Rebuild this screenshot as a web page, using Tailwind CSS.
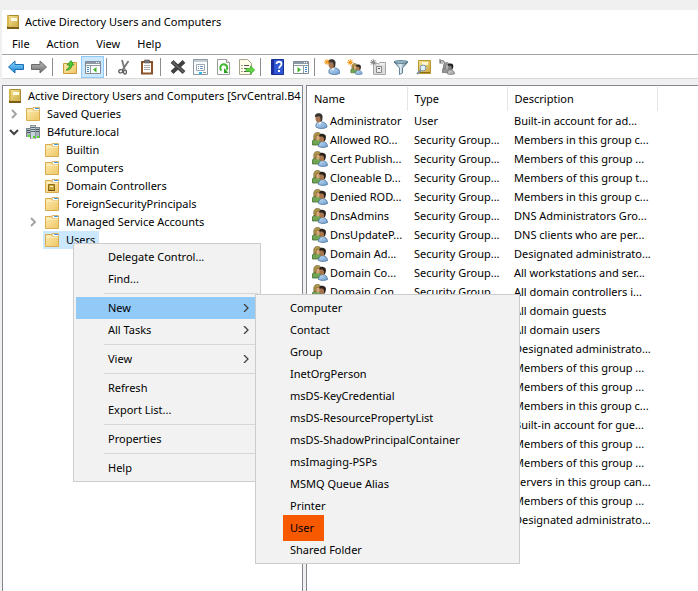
<!DOCTYPE html>
<html lang="en">
<head>
    <meta charset="UTF-8">
    <meta name="viewport" content="width=device-width, initial-scale=1.0">
    <title>Active Directory Users and Computers</title>
    <script src="https://cdn.jsdelivr.net/npm/@tailwindcss/browser@4"></script>
</head>
<body class="bg-[#f0f0f0] font-['Noto_Sans',sans-serif] text-[11px] leading-4 text-black">

  <!-- icons -->
  <svg class="absolute w-0 h-0">
    <defs>
      <linearGradient id="gold" x1="0" y1="0" x2="1" y2="1"><stop offset="0" stop-color="#f6e49a"/><stop offset="1" stop-color="#c9a63c"/></linearGradient>
      <linearGradient id="tan" x1="0" y1="0" x2="1" y2="1"><stop offset="0" stop-color="#fdeaae"/><stop offset="1" stop-color="#eec766"/></linearGradient>
      <linearGradient id="blue" x1="0" y1="0" x2="0" y2="1"><stop offset="0" stop-color="#8fd8fb"/><stop offset="1" stop-color="#1583d6"/></linearGradient>
      <linearGradient id="gray" x1="0" y1="0" x2="0" y2="1"><stop offset="0" stop-color="#bdbdbd"/><stop offset="1" stop-color="#6e6e6e"/></linearGradient>
      <linearGradient id="steel" x1="0" y1="0" x2="1" y2="0"><stop offset="0" stop-color="#5c8299"/><stop offset=".45" stop-color="#e3f1f7"/><stop offset="1" stop-color="#3f6178"/></linearGradient>
      <linearGradient id="shirt" x1="0" y1="0" x2="1" y2="1"><stop offset="0" stop-color="#c3dcf4"/><stop offset="1" stop-color="#6f9fd0"/></linearGradient>
    </defs>

    <symbol id="book" viewBox="0 0 16 16">
      <path d="M2.500 1.500h11v13h-11z" fill="url(#gold)" stroke="#a88a30"/>
      <path d="M2 1h2v11H2z" fill="#d8b64c"/>
      <path d="M6 4h6v3H6z" fill="#fffbe2"/>
      <path d="M2 13h12v2H2z" fill="#7d5d14"/><path d="M3 12h10v1H3z" fill="#d6b85a"/>
    </symbol>
    <symbol id="folder" viewBox="0 0 16 16">
      <path d="M8 1.500h6.500v4H8z" fill="#fff" stroke="#d9b469" stroke-width="1"/>
      <path d="M10 2h4v1h-4z" fill="#3f9be6"/>
      <path d="M1.500 2.500h6l1 2h6v10h-13z" fill="url(#tan)" stroke="#d9ac4e"/>
      <path d="M2 5h12" stroke="#fff3cb"/>
    </symbol>
    <symbol id="oufolder" viewBox="0 0 16 16">
      <use href="#folder"/>
      <path d="M4.500 6.500h6v6h-6z" fill="#c9a437" stroke="#8d6b14"/><path d="M6 8h3v1H6z" fill="#fffbe2"/><path d="M4 12h7v1H4z" fill="#6d5010"/>
    </symbol>
    <symbol id="domain" viewBox="0 0 16 16">
      <path d="M1 4h5v9H1z" fill="#a9b4bb"/><path d="M10 3h5v11h-5z" fill="#a9b4bb"/>
      <path d="M1 4h5v1H1zM10 3h5v1h-5zM1 4h1v9H1zM14 4h1v10h-1z" fill="#76838b"/>
      <path d="M2 6.500h3M2 8.500h3M11 5.500h3M11 7.500h3" stroke="#4d5b64"/>
      <path d="M5 1h6v14H5z" fill="#c9d2d7"/><path d="M5 1h6v1H5zM5 1h1v14H5zM10 1h1v14h-1z" fill="#86929a"/>
      <path d="M6 3.500h4M6 5.500h4M6 7.500h4" stroke="#56646d"/>
      <path d="M3 11h2v2H3zM8 12h2v2H8zM12 12h2v2h-2z" fill="#4ee01d"/>
    </symbol>
    <symbol id="user" viewBox="0 0 16 16">
      <path d="M4 14c-.500-3 .500-5 3.500-5.500l3 .500c3 .500 4.500 2.500 4.500 5-3 2-8 2-11 0z" fill="url(#shirt)" stroke="#48709c" stroke-width=".8"/>
      <path d="M6 8l2 3.500L10 8z" fill="#fff"/>
      <path d="M3.500 3.500h6v3c0 2-1.500 3-3 3-2 0-3-2-3-4z" fill="#a87650"/>
      <path d="M3 4C2.500 1.500 4.500.200 6.500.200 9.500.200 11 2 10.500 5L10 8l-1.500 1V5L7.500 3.500z" fill="#39332f"/>
    </symbol>
    <symbol id="group" viewBox="0 0 16 16">
      <path d="M.500 13v-4c1-2 3-2.500 4.500-2.500s3 .500 3.500 2.500v4z" fill="#70a653" stroke="#426b2d" stroke-width=".8"/>
      <path d="M3 3h5v3c0 2-1 2.500-2.500 2.500S3 7 3 5z" fill="#d9a878"/>
      <path d="M2 7.500C1 2 3 .500 5.500 .500S9 2 9 3.500L5 3 4 4v4z" fill="#b59a4a" stroke="#5f5026" stroke-width=".6"/>
      <path d="M6.500 14.500c0-3 1.500-5 4-5s5 2 5 5c-3 1.200-6 1.200-9 0z" fill="url(#shirt)" stroke="#48709c" stroke-width=".8"/>
      <path d="M7.500 4h5v3.500c0 2-1 2.500-2.500 2.500S7.500 8.500 7.500 7z" fill="#a8754d"/>
      <path d="M7.200 4.500c0-2.500 2-2.800 4-2.600 2.800.300 3.500 3 2 6.600L12 9.500V6l-1.500-1.500z" fill="#28221f"/>
    </symbol>
    <symbol id="star" viewBox="0 0 16 16">
      <path d="M4 0v8M0 4h8M1.200 1.200l5.600 5.600M6.800 1.200L1.200 6.800" stroke="currentColor" stroke-width="1.200"/><circle cx="4" cy="4" r="2" fill="currentColor"/>
    </symbol>
    <symbol id="chevron" viewBox="0 0 8 8"><path d="M2 0l4 4-4 4" fill="none" stroke="currentColor" stroke-width="1.300"/></symbol>
    <symbol id="tree-chevron" viewBox="0 0 10 10"><path d="M3 1l4 4-4 4" fill="none" stroke="currentColor" stroke-width="1.800"/></symbol>
    <symbol id="chevron-down" viewBox="0 0 10 8"><path d="M1 2l4 4 4-4" fill="none" stroke="currentColor" stroke-width="2"/></symbol>
  </svg>

  <div class="flex flex-col min-h-screen pt-[10px] pl-[2px]">
    <header class="bg-white">
      <div class="flex items-center h-6 pl-[3px] gap-1">
        <svg class="w-4 h-4"><use href="#book"/></svg>
        <h1>Active Directory Users and Computers</h1>
      </div>
      <nav class="flex items-center h-5 pl-[10px] gap-[17px]">
        <button>File</button>
        <button>Action</button>
        <button>View</button>
        <button>Help</button>
      </nav>

      <!-- toolbar -->
      <div class="flex items-center h-[25px] pl-[2px] border-t border-b border-t-[#a3a3a8] border-b-[#d9d9d9]">
        <button aria-label="Back" class="flex w-[23px] h-[22px] items-center justify-center">
          <svg class="w-4 h-4" viewBox="0 0 16 16"><path d="M.500 8L7 2v3.500h8.500v5H7V14z" fill="url(#blue)" stroke="#1c6db3"/></svg>
        </button>
        <button aria-label="Forward" class="flex w-[23px] h-[22px] items-center justify-center">
          <svg class="w-4 h-4" viewBox="0 0 16 16"><path d="M15.500 8L9 2v3.500H.500v5H9V14z" fill="url(#gray)" stroke="#6b6b6b"/></svg>
        </button>
        <span class="w-px h-[18px] mr-[5px] ml-[2px] bg-[#8d8d8d]"></span>
        <button aria-label="Up one level" class="flex w-[23px] h-[22px] items-center justify-center">
          <svg class="w-4 h-4" viewBox="0 0 16 16"><path d="M1.500 4.500h6l1-1h6v11h-13z" fill="url(#tan)" stroke="#c99b3c"/><path d="M4 11c2-1 3.500-3 3.500-5H5l4-4.500L12 6h-2c0 3-2.500 5.500-6 5z" fill="#4fc93a" stroke="#268a1b" stroke-width=".7"/></svg>
        </button>
        <button aria-label="Console tree" class="flex w-[23px] h-[22px] items-center justify-center border border-[#90c8f6] bg-[#cce8ff]">
          <svg class="w-4 h-4" viewBox="0 0 16 16"><path d="M.500 2.500h15v12H.500z" fill="#fff" stroke="#7e8b97"/><path d="M1 3h14v2H1z" fill="#8d99a4"/><path d="M1 6.500h14M5.500 7v7" stroke="#8d99a4"/><path d="M11 3.500h1M13 3.500h1" stroke="#fff"/><path d="M2 8.500h2M2 10.500h2M2 12.500h2" stroke="#3c86c8"/><path d="M11.500 8v5.500l-3.500-2.700z" fill="#3fb52a"/></svg>
        </button>
        <span class="w-px h-[18px] mr-[5px] ml-[2px] bg-[#8d8d8d]"></span>
        <button aria-label="Cut" class="flex w-[23px] h-[22px] items-center justify-center">
          <svg class="w-4 h-4" viewBox="0 0 16 16" fill="none"><path d="M6 1l2.500 9M12.500 2L6.500 11" stroke="#777" stroke-width="1.800"/><ellipse cx="4.800" cy="12.300" rx="2" ry="1.700" stroke="#555" stroke-width="1.200"/><ellipse cx="9" cy="13" rx="1.400" ry="2.200" stroke="#555" stroke-width="1.200"/></svg>
        </button>
        <button aria-label="Paste" class="flex w-[23px] h-[22px] items-center justify-center">
          <svg class="w-4 h-4" viewBox="0 0 16 16"><path d="M3 3h10v11.500H3z" fill="#fff" stroke="#8a5229" stroke-width="2"/><path d="M5.500 1h5v3h-5z" fill="#777" stroke="#555" stroke-width=".6"/><path d="M5 6.500h6M5 8.500h6M5 10.500h6" stroke="#aaa"/></svg>
        </button>
        <span class="w-px h-[18px] mr-[5px] ml-[2px] bg-[#8d8d8d]"></span>
        <button aria-label="Delete" class="flex w-[23px] h-[22px] items-center justify-center">
          <svg class="w-4 h-4" viewBox="0 0 16 16"><path d="M2 2.500l12 11M14 2.500l-12 11" stroke="#404040" stroke-width="4"/><path d="M2 2.500l12 11" stroke="#666" stroke-width="1.500"/></svg>
        </button>
        <button aria-label="Properties" class="flex w-[23px] h-[22px] items-center justify-center">
          <svg class="w-4 h-4" viewBox="0 0 16 16"><path d="M.500.500h14v15H.500z" fill="#fbfcfd" stroke="#8f98a1"/><path d="M1 1h13v2H1z" fill="#c5cdd5"/><path d="M3.500 5.500h8v6h-8z" fill="#fff" stroke="#9fa9b5"/><path d="M5 7.500h1M7 7.500h3M5 9.500h1M7 9.500h3" stroke="#6f93ba"/><path d="M6 13h3v2H6z" fill="#25baf0"/><path d="M10 13.500h3" stroke="#8f98a1"/></svg>
        </button>
        <button aria-label="Refresh" class="flex w-[23px] h-[22px] items-center justify-center">
          <svg class="w-4 h-4" viewBox="0 0 16 16"><path d="M1.500.500h9l3 3v12h-12z" fill="#fff" stroke="#9a9a9a"/><path d="M10.500.500v3h3" fill="#eee" stroke="#9a9a9a"/><path d="M5.500 11.500A3.500 3.500 0 1 1 10.500 11" fill="none" stroke="#43b834" stroke-width="2"/><path d="M8 9v5h4.500z" fill="#2f9e23"/></svg>
        </button>
        <button aria-label="Export list" class="flex w-[23px] h-[22px] items-center justify-center">
          <svg class="w-4 h-4" viewBox="0 0 16 16"><path d="M.500.500h8l4 4v11H.500z" fill="#fffdea" stroke="#a8a48d"/><path d="M2.500 6.500h1M2.500 9.500h1M2.500 12.500h1M5 6.500h5M5 9.500h3M5 12.500h5" stroke="#555"/><path d="M7 9.500h4.500V7l4.200 4-4.200 4v-2.500H7z" fill="#62d944" stroke="#2f9e23" stroke-width=".7"/></svg>
        </button>
        <span class="w-px h-[18px] mr-[5px] ml-[2px] bg-[#8d8d8d]"></span>
        <button aria-label="Help" class="flex w-[23px] h-[22px] items-center justify-center">
          <svg class="w-4 h-4" viewBox="0 0 16 16"><path d="M1.500 .500h12v15h-12z" fill="#3057d6" stroke="#1b2e8f"/><path d="M2 1h2v14H2z" fill="#1b2e9f"/><path d="M6.500 5c0-3 5-3 5 0 0 2-2.500 2.200-2.500 4.500" fill="none" stroke="#fff" stroke-width="1.800"/><path d="M8 11h2v2H8z" fill="#fff"/></svg>
        </button>
        <button aria-label="Action pane" class="flex w-[23px] h-[22px] items-center justify-center">
          <svg class="w-4 h-4" viewBox="0 0 16 16"><path d="M.500 2.500h15v12H.500z" fill="#fff" stroke="#7e8b97"/><path d="M1 3h14v2H1z" fill="#8d99a4"/><path d="M1 6.500h14M10.500 7v7" stroke="#8d99a4"/><path d="M11 3.500h1M13 3.500h1" stroke="#fff"/><path d="M12 8.500h2M12 10.500h2M12 12.500h2" stroke="#3c86c8"/><path d="M4.500 8v5.500L8 10.800z" fill="#3fb52a"/></svg>
        </button>
        <span class="w-px h-[18px] mr-[5px] ml-[2px] bg-[#8d8d8d]"></span>
        <button aria-label="New user" class="flex w-[23px] h-[22px] items-center justify-center">
          <svg class="w-4 h-4" viewBox="0 0 16 16"><use href="#user" x="1" y="0" width="16" height="16"/><use href="#star" width="12" height="12" class="text-[#f39a1c]"/></svg>
        </button>
        <button aria-label="New group" class="flex w-[23px] h-[22px] items-center justify-center">
          <svg class="w-4 h-4" viewBox="0 0 16 16"><use href="#group" x="3" y="4" width="13" height="12"/><use href="#star" width="13" height="13" class="text-[#f39a1c]"/></svg>
        </button>
        <button aria-label="New organizational unit" class="flex w-[23px] h-[22px] items-center justify-center">
          <svg class="w-4 h-4" viewBox="0 0 16 16"><path d="M3.500 4.500h5l1-1h6v12h-12z" fill="#dcdcdc" stroke="#a8a8a8"/><path d="M10 5h5" stroke="#fff"/><path d="M6.500 7.500h5v6h-5z" fill="#ececec" stroke="#888"/><path d="M8 9.500h2" stroke="#555"/><use href="#star" width="13" height="13" class="text-[#8b8b8b]"/></svg>
        </button>
        <button aria-label="Filter" class="flex w-[23px] h-[22px] items-center justify-center">
          <svg class="w-4 h-4" viewBox="0 0 16 16"><path d="M1 3l5.500 6v6.500l3-1.500V9L15 3z" fill="url(#steel)" stroke="#47687d" stroke-width=".8"/><ellipse cx="8" cy="3" rx="7" ry="1.400" fill="#9dbccb" stroke="#47687d" stroke-width=".8"/></svg>
        </button>
        <button aria-label="Find" class="flex w-[23px] h-[22px] items-center justify-center">
          <svg class="w-4 h-4" viewBox="0 0 16 16"><path d="M2.500 1.500h12v13h-12z" fill="url(#gold)" stroke="#b8982e"/><path d="M6 3h6v3H6z" fill="#fff8cf"/><path d="M3 13h11v1H3z" fill="#8c6c17"/><circle cx="7" cy="9" r="3" fill="#dff0fb" stroke="#7c93a6"/><path d="M4.800 11.200L1 15" stroke="#7c93a6" stroke-width="2"/></svg>
        </button>
        <button aria-label="Add to group" class="flex w-[23px] h-[22px] items-center justify-center">
          <svg class="w-4 h-4 grayscale" viewBox="0 0 16 16"><use href="#group" x="3" y="3" width="13" height="13"/><path d="M1 3.500C2 1 4.500 1 5.500 4M1 0v4h3" fill="none" stroke="#777" stroke-width="1.200"/></svg>
        </button>
      </div>
    </header>

    <main class="flex grow pt-[6px]">
      <!-- console tree -->
      <div class="relative w-[301px] shrink-0 bg-white border-t border-l border-r border-[#828790]">
        <ul class="pt-px whitespace-nowrap overflow-hidden">
          <li class="flex items-center h-[18px] pl-1 gap-[5px]"><svg class="w-4 h-4 shrink-0"><use href="#book"/></svg>Active Directory Users and Computers [SrvCentral.B4</li>
          <li class="flex items-center h-[18px] pl-[6px] gap-[6px]">
            <svg class="w-[10px] h-[10px] text-[#a0a0a0]"><use href="#tree-chevron"/></svg><svg class="w-4 h-4"><use href="#folder"/></svg>Saved Queries
          </li>
          <li class="flex items-center h-[18px] pl-[6px] gap-[6px]">
            <svg class="w-[10px] h-[10px] text-[#404040]"><use href="#chevron-down"/></svg><svg class="w-4 h-4"><use href="#domain"/></svg>B4future.local
          </li>
          <li class="flex items-center h-[18px] pl-[41px] gap-[6px]"><svg class="w-4 h-4"><use href="#folder"/></svg>Builtin</li>
          <li class="flex items-center h-[18px] pl-[41px] gap-[6px]"><svg class="w-4 h-4"><use href="#folder"/></svg>Computers</li>
          <li class="flex items-center h-[18px] pl-[41px] gap-[6px]"><svg class="w-4 h-4"><use href="#oufolder"/></svg>Domain Controllers</li>
          <li class="flex items-center h-[18px] pl-[41px] gap-[6px]"><svg class="w-4 h-4"><use href="#folder"/></svg>ForeignSecurityPrincipals</li>
          <li class="flex items-center h-[18px] pl-[25px] gap-[6px]">
            <svg class="w-[10px] h-[10px] text-[#a0a0a0]"><use href="#tree-chevron"/></svg><svg class="w-4 h-4"><use href="#folder"/></svg>Managed Service Accounts
          </li>
          <li class="flex h-[18px] pl-10"><span class="flex items-center pl-px pr-1 gap-[6px] bg-[#cce8ff]"><svg class="w-4 h-4"><use href="#folder"/></svg>Users</span></li>
        </ul>

        <!-- context menu -->
        <div class="absolute left-[70px] top-[157px] z-10 w-[188px] p-[2px] bg-[#f2f2f2] border border-[#ccc]">
          <button class="flex items-center w-full h-[22px] pl-8">Delegate Control...</button>
          <button class="flex items-center w-full h-[22px] pl-8">Find...</button>
          <hr class="my-[3px] ml-7 border-[#d7d7d7]">
          <button class="flex items-center justify-between w-full h-[22px] pl-8 pr-2 bg-[#91c9f7]">New<svg class="w-2 h-2 text-[#404040]"><use href="#chevron"/></svg></button>
          <button class="flex items-center justify-between w-full h-[22px] pl-8 pr-2">All Tasks<svg class="w-2 h-2 text-[#404040]"><use href="#chevron"/></svg></button>
          <hr class="my-[3px] ml-7 border-[#d7d7d7]">
          <button class="flex items-center justify-between w-full h-[22px] pl-8 pr-2">View<svg class="w-2 h-2 text-[#404040]"><use href="#chevron"/></svg></button>
          <hr class="my-[3px] ml-7 border-[#d7d7d7]">
          <button class="flex items-center w-full h-[22px] pl-8">Refresh</button>
          <button class="flex items-center w-full h-[22px] pl-8">Export List...</button>
          <hr class="my-[3px] ml-7 border-[#d7d7d7]">
          <button class="flex items-center w-full h-[22px] pl-8">Properties</button>
          <hr class="my-[3px] ml-7 border-[#d7d7d7]">
          <button class="flex items-center w-full h-[22px] pl-8">Help</button>

          <!-- New submenu -->
          <div class="absolute left-[181px] top-[50px] w-[265px] p-[2px] bg-[#f2f2f2] border border-[#ccc]">
            <button class="flex items-center w-full h-[22px] pl-8">Computer</button>
            <button class="flex items-center w-full h-[22px] pl-8">Contact</button>
            <button class="flex items-center w-full h-[22px] pl-8">Group</button>
            <button class="flex items-center w-full h-[22px] pl-8">InetOrgPerson</button>
            <button class="flex items-center w-full h-[22px] pl-8">msDS-KeyCredential</button>
            <button class="flex items-center w-full h-[22px] pl-8">msDS-ResourcePropertyList</button>
            <button class="flex items-center w-full h-[22px] pl-8">msDS-ShadowPrincipalContainer</button>
            <button class="flex items-center w-full h-[22px] pl-8">msImaging-PSPs</button>
            <button class="flex items-center w-full h-[22px] pl-8">MSMQ Queue Alias</button>
            <button class="flex items-center w-full h-[22px] pl-8">Printer</button>
            <button class="flex items-center w-full h-[22px] pl-[25px]"><span class="-my-1 py-[5px] pl-[7px] pr-[10px] bg-[#f65900]">User</span></button>
            <button class="flex items-center w-full h-[22px] pl-8">Shared Folder</button>
          </div>
        </div>
      </div>

      <!-- object list -->
      <div class="grow ml-[3px] bg-white border-t border-l border-[#828790]">
        <table class="w-full mt-px table-fixed whitespace-nowrap text-left">
          <thead>
            <tr class="h-6">
              <th class="w-[100px] pl-[7px] font-normal border-r border-[#e5e5e5]">Name</th>
              <th class="w-[100px] pl-[7px] font-normal border-r border-[#e5e5e5]">Type</th>
              <th class="w-[150px] pl-[7px] font-normal border-r border-[#e5e5e5]">Description</th>
              <th></th>
            </tr>
          </thead>
          <tbody id="rows"></tbody>
        </table>
      </div>
    </main>
  </div>

<script>
  const rows = [
    ["user", "Administrator", "User", "Built-in account for ad..."],
    ["group", "Allowed RO...", "Security Group...", "Members in this group c..."],
    ["group", "Cert Publish...", "Security Group...", "Members of this group ..."],
    ["group", "Cloneable D...", "Security Group...", "Members of this group t..."],
    ["group", "Denied ROD...", "Security Group...", "Members in this group c..."],
    ["group", "DnsAdmins", "Security Group...", "DNS Administrators Gro..."],
    ["group", "DnsUpdateP...", "Security Group...", "DNS clients who are per..."],
    ["group", "Domain Ad...", "Security Group...", "Designated administrato..."],
    ["group", "Domain Co...", "Security Group...", "All workstations and ser..."],
    ["group", "Domain Con...", "Security Group...", "All domain controllers i..."],
    ["", "", "", "All domain guests"],
    ["", "", "", "All domain users"],
    ["", "", "", "Designated administrato..."],
    ["", "", "", "Members of this group ..."],
    ["", "", "", "Members of this group ..."],
    ["", "", "", "Members in this group c..."],
    ["", "", "", "Built-in account for gue..."],
    ["", "", "", "Members of this group ..."],
    ["", "", "", "Members of this group ..."],
    ["", "", "", "Servers in this group can..."],
    ["", "", "", "Members of this group ..."],
    ["", "", "", "Designated administrato..."]
  ];

  document.getElementById("rows").innerHTML = rows.map(([icon, name, type, desc]) => `
    <tr class="h-[19px]">
      <td class="pl-[5px]"><div class="flex items-center gap-[2px]">${icon ? `<svg class="w-4 h-4 shrink-0"><use href="#${icon}"/></svg>` : ""}${name}</div></td>
      <td class="pl-[7px]">${type}</td>
      <td class="pl-[7px]">${desc}</td>
      <td></td>
    </tr>`).join("");
</script>
</body>
</html>
